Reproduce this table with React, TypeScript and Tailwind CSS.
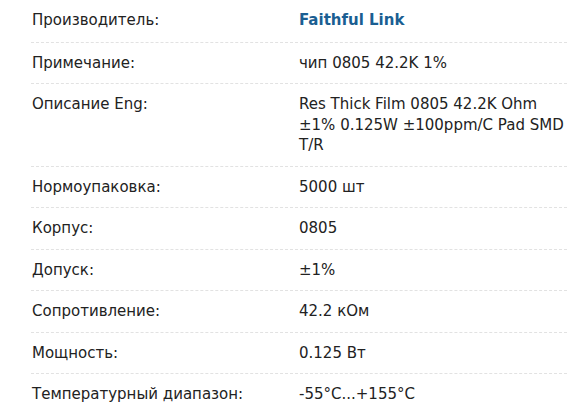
import React from "react";

const rows: { label: string; value: string; link?: boolean }[] = [
  { label: "Производитель:", value: "Faithful Link", link: true },
  { label: "Примечание:", value: "чип 0805 42.2K 1%" },
  { label: "Описание Eng:", value: "Res Thick Film 0805 42.2K Ohm ±1% 0.125W ±100ppm/C Pad SMD T/R" },
  { label: "Нормоупаковка:", value: "5000 шт" },
  { label: "Корпус:", value: "0805" },
  { label: "Допуск:", value: "±1%" },
  { label: "Сопротивление:", value: "42.2 кОм" },
  { label: "Мощность:", value: "0.125 Вт" },
  { label: "Температурный диапазон:", value: "-55°C...+155°C" },
];

export default function App() {
  return (
    <div className="w-[588px] h-[410px] overflow-hidden bg-white pl-[31px] pr-[21px]" style={{ fontFamily: '"DejaVu Sans", sans-serif' }}>
      <div className="flex flex-col">
        {rows.map((r, i) => (
          <div
            key={i}
            className={`flex text-[15px] leading-[20.5px] text-[#222222] ${i < rows.length - 1 ? "border-b border-dashed border-[#e2e2e2]" : ""} ${i === 0 ? "pt-[10px] pb-[11px]" : "py-[10px]"}`}
          >
            <div className="w-[268px] shrink-0 pl-px">{r.label}</div>
            <div className={`w-[268px] ${r.link ? "font-bold text-[#1a5e92]" : ""}`}>{r.value}</div>
          </div>
        ))}
      </div>
    </div>
  );
}
